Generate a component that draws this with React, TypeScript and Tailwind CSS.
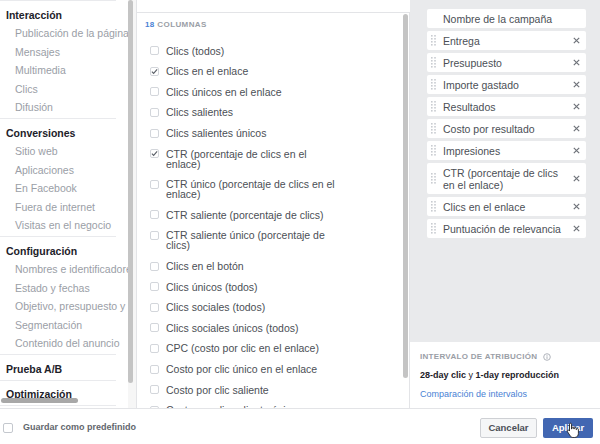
import React from "react";

const sections: { title: string; items: string[] }[] = [
  { title: "Interacción", items: ["Publicación de la página", "Mensajes", "Multimedia", "Clics", "Difusión"] },
  { title: "Conversiones", items: ["Sitio web", "Aplicaciones", "En Facebook", "Fuera de internet", "Visitas en el negocio"] },
  { title: "Configuración", items: ["Nombres e identificadores", "Estado y fechas", "Objetivo, presupuesto y programación", "Segmentación", "Contenido del anuncio"] },
  { title: "Prueba A/B", items: [] },
  { title: "Optimización", items: [] },
];

const columns: { label: string; checked?: boolean }[] = [
  { label: "Clics (todos)" },
  { label: "Clics en el enlace", checked: true },
  { label: "Clics únicos en el enlace" },
  { label: "Clics salientes" },
  { label: "Clics salientes únicos" },
  { label: "CTR (porcentaje de clics en el enlace)", checked: true },
  { label: "CTR único (porcentaje de clics en el enlace)" },
  { label: "CTR saliente (porcentaje de clics)" },
  { label: "CTR saliente único (porcentaje de clics)" },
  { label: "Clics en el botón" },
  { label: "Clics únicos (todos)" },
  { label: "Clics sociales (todos)" },
  { label: "Clics sociales únicos (todos)" },
  { label: "CPC (costo por clic en el enlace)" },
  { label: "Costo por clic único en el enlace" },
  { label: "Costo por clic saliente" },
  { label: "Costo por clic saliente único" },
];

const selected = [
  "Entrega",
  "Presupuesto",
  "Importe gastado",
  "Resultados",
  "Costo por resultado",
  "Impresiones",
  "CTR (porcentaje de clics en el enlace)",
  "Clics en el enlace",
  "Puntuación de relevancia",
];

function Checkbox({ checked }: { checked?: boolean }) {
  return (
    <span className="mt-[0.5px] w-[9px] h-[9px] shrink-0 rounded-[2px] border border-[#d3d6db] bg-white flex items-center justify-center">
      {checked && (
        <svg width="8" height="7" viewBox="0 0 8 7">
          <path d="M1 3.6 L3 5.6 L7 1" fill="none" stroke="#5b6068" strokeWidth="1.3" />
        </svg>
      )}
    </span>
  );
}

function Dots() {
  const dots = [];
  for (let r = 0; r < 4; r++) {
    for (let c = 0; c < 2; c++) {
      dots.push(<rect key={`${r}-${c}`} x={c * 3.2} y={r * 3} width="1.6" height="1.6" fill="#c9ccd1" />);
    }
  }
  return (
    <svg width="5" height="11" viewBox="0 0 5 11">
      {dots}
    </svg>
  );
}

function Close() {
  return (
    <svg width="7" height="7" viewBox="0 0 7 7">
      <path d="M0.8 0.8 L6.2 6.2 M6.2 0.8 L0.8 6.2" stroke="#6f737a" strokeWidth="1.2" />
    </svg>
  );
}

export default function App() {
  return (
    <div className="relative w-[600px] h-[444px] bg-white overflow-hidden flex flex-col font-['Liberation_Sans',Arial,sans-serif]">
      <div className="flex h-[408px]">
        {/* Left category panel */}
        <div className="relative w-[137px] flex border-r border-[#e3e4e7]">
          <div className="w-[128px] overflow-hidden">
            <div className="w-[200px]">
              <div className="w-[116px] border-t border-[#e9eaed] mb-[4.5px]" />
              {sections.map((s) => (
                <div key={s.title}>
                  <div className="h-[18.5px] leading-[18.5px] pl-[6px] text-[10.5px] font-bold text-[#1d2129] whitespace-nowrap">
                    {s.title}
                  </div>
                  {s.items.map((it) => (
                    <div key={it} className="h-[18.5px] leading-[18.5px] pl-[15px] text-[10.5px] text-[#9a9ea6] whitespace-nowrap">
                      {it}
                    </div>
                  ))}
                  <div className="mt-[1.5px] w-[116px] border-t border-[#e9eaed] mb-[4.5px]" />
                </div>
              ))}
            </div>
          </div>
          <div className="relative w-[8px] bg-[#f6f6f6]">
            <div className="absolute left-0 top-0 w-[5px] h-[383px] rounded-full bg-[#c4c4c4]" />
          </div>
          <div className="absolute left-[1px] top-[398px] w-[77px] h-[5px] rounded-full bg-[#a8a8a8]" />
        </div>

        {/* Middle column list */}
        <div className="w-[273px] pt-[12px] flex flex-col">
          <div className="flex-1 flex border-t border-[#e3e4e7] overflow-hidden">
            <div className="flex-1 pl-[8px] pt-[7px] overflow-hidden">
              <div className="h-[10px] text-[8px] leading-[10px] font-bold tracking-[0.4px] whitespace-nowrap">
                <span className="text-[#4a7fd4]">18</span> <span className="text-[#9a9ea6]">COLUMNAS</span>
              </div>
              <div className="mt-[10.4px]">
                {columns.map((c) => (
                  <div key={c.label} className="flex items-start gap-[7px] py-[5.3px] pl-[5px]">
                    <Checkbox checked={c.checked} />
                    <span className="max-w-[172px] text-[10.5px] leading-[10px] text-[#4b4f56]">{c.label}</span>
                  </div>
                ))}
              </div>
            </div>
            <div className="relative w-[9px] border-r border-[#e3e4e7]">
              <div className="absolute left-[2px] top-[1px] w-[5px] h-[364px] rounded-full bg-[#c4c4c4]" />
            </div>
          </div>
        </div>

        {/* Right selected columns */}
        <div className="w-[190px] bg-[#e9eaec] flex flex-col">
          <div className="pt-[9px] pl-[17px] pr-[14px] flex flex-col gap-[3px]">
            <div className="flex items-center bg-white rounded-[2px] py-[3.5px] pl-[16px]">
              <span className="text-[10.5px] leading-[12px] text-[#4b4f56]">Nombre de la campaña</span>
            </div>
            {selected.map((s) => (
              <div key={s} className="flex items-center bg-white rounded-[2px] py-[3.5px] pl-[4px]">
                <span className="w-[5px] mr-[7px] flex items-center">
                  <Dots />
                </span>
                <span className="w-[124px] text-[10.5px] leading-[12px] text-[#4b4f56]">{s}</span>
                <span className="w-[19px] flex items-center justify-center">
                  <Close />
                </span>
              </div>
            ))}
          </div>
          <div className="mt-auto h-[66px] bg-white pl-[10px] pt-[10px]">
            <div className="flex items-center gap-[6px] h-[9px]">
              <span className="text-[8px] leading-[9px] font-bold tracking-[0.3px] text-[#9a9ea6]">INTERVALO DE ATRIBUCIÓN</span>
              <svg width="8" height="8" viewBox="0 0 8 8">
                <circle cx="4" cy="4" r="3.3" fill="none" stroke="#b0b4bb" strokeWidth="1" />
                <rect x="3.5" y="3.3" width="1" height="2.6" fill="#b0b4bb" />
                <rect x="3.5" y="1.9" width="1" height="0.9" fill="#b0b4bb" />
              </svg>
            </div>
            <div className="mt-[9px] text-[9px] leading-[11px] text-[#1d2129] whitespace-nowrap">
              <span className="font-bold">28-day clic</span> y <span className="font-bold">1-day reproducción</span>
            </div>
            <div className="mt-[8px] text-[9px] leading-[11px] text-[#4a7fd4] whitespace-nowrap">Comparación de intervalos</div>
          </div>
        </div>
      </div>

      {/* Footer */}
      <div className="h-[36px] border-t border-[#e3e4e7] flex items-start pt-[9px]">
        <div className="flex items-center h-[20px] pl-[3px]">
          <span className="w-[10px] h-[10px] rounded-[2px] border border-[#c4c8ce] bg-white" />
          <span className="ml-[10px] text-[9px] font-bold text-[#62666d] whitespace-nowrap">Guardar como predefinido</span>
        </div>
        <div className="ml-auto mr-[7px] flex items-center gap-[6px]">
          <button className="w-[57px] h-[20px] rounded-[2px] border border-[#ced0d4] bg-[#f5f6f7] text-[9.5px] font-bold text-[#4b4f56]">
            Cancelar
          </button>
          <button className="w-[50px] h-[20px] rounded-[2px] bg-[#4267b2] text-[9.5px] font-bold text-white">Aplicar</button>
        </div>
      </div>

      {/* Mouse cursor */}
      <svg className="absolute left-[566px] top-[422px]" width="14" height="17" viewBox="0 0 14 17">
        <path
          d="M4.5 1.2c.6 0 1 .4 1 1V7h.4V6c0-.6.4-1 1-1s1 .4 1 1v1h.3v-.5c0-.6.4-1 1-1s1 .4 1 1V7.6h.2c0-.6.4-1 1-1s1 .4 1 1V11.5c0 2.2-1.5 4-3.7 4H7.1c-1.3 0-2.1-.5-2.8-1.5L1.5 9.8c-.4-.5-.3-1.2.2-1.5.5-.3 1.1-.2 1.5.3l.3.4V2.2c0-.6.4-1 1-1z"
          fill="white"
          stroke="#222"
          strokeWidth="0.9"
        />
      </svg>
    </div>
  );
}
